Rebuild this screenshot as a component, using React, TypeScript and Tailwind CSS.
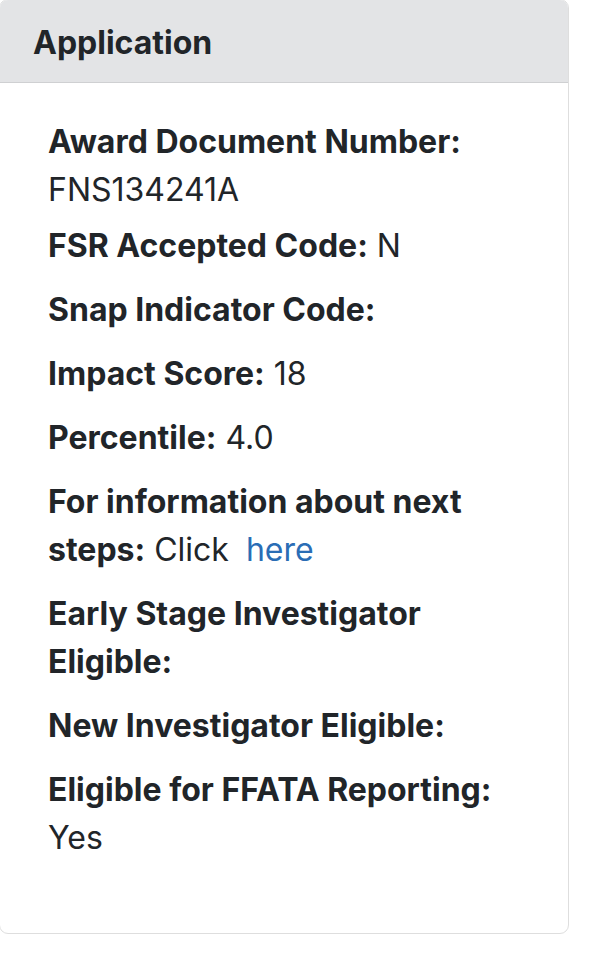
import React from "react";

const items: { label: string; value?: React.ReactNode; mb?: string }[] = [
  { label: "Award Document Number:", value: "FNS134241A", mb: "mb-2" },
  { label: "FSR Accepted Code:", value: "N" },
  { label: "Snap Indicator Code:" },
  { label: "Impact Score:", value: "18" },
  { label: "Percentile:", value: "4.0" },
  {
    label: "For information about next steps:",
    value: (
      <>
        Click{" "}
        <a href="#" className="ml-2 text-[#2a6db5] no-underline">
          here
        </a>
      </>
    ),
  },
  { label: "Early Stage Investigator Eligible:" },
  { label: "New Investigator Eligible:" },
  { label: "Eligible for FFATA Reporting:", value: "Yes" },
];

export default function App() {
  return (
    <div className="w-[604px] h-[958px] bg-white overflow-hidden font-['Inter','Liberation_Sans',sans-serif] text-[#212529]">
      <div className="-ml-px -mt-px w-[570px] h-[935px] border border-[#dedede] rounded-[9px] overflow-hidden flex flex-col">
        <div className="h-[83px] shrink-0 bg-[#e3e4e6] border-b border-[#cfd0d2] pl-[33px] pt-[4px] flex items-center">
          <span className="text-[32px] font-bold">Application</span>
        </div>
        <div className="pl-[48px] pr-[44px] pt-[35px] text-[32px] leading-[48px]">
          {items.map((it) => (
            <p key={it.label} className={it.mb ?? "mb-4"}>
              <strong className="font-bold">{it.label}</strong>
              {it.value !== undefined ? <> {it.value}</> : null}
            </p>
          ))}
        </div>
      </div>
    </div>
  );
}
